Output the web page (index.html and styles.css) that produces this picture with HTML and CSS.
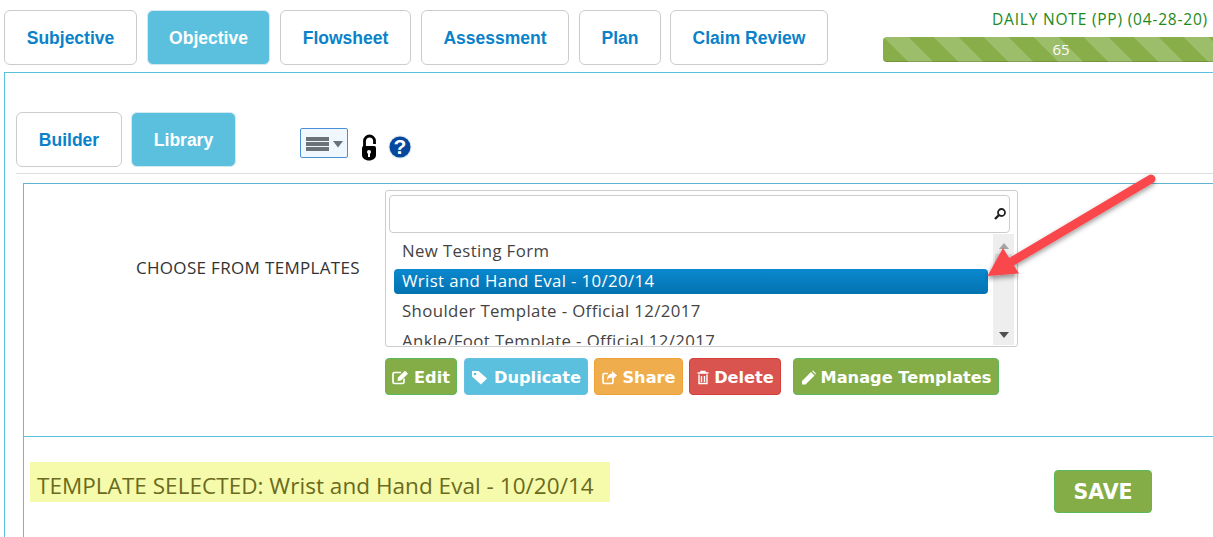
FILE: index.html
```html
<!DOCTYPE html>
<html lang="en">
<head>
<meta charset="utf-8">
<title>Daily Note</title>
<link rel="stylesheet" href="styles.css">
</head>
<body>
<div class="page">
  <header class="top">
    <nav class="tabs">
      <a class="tab tab-subj">Subjective</a>
      <a class="tab tab-obj active">Objective</a>
      <a class="tab tab-flow">Flowsheet</a>
      <a class="tab tab-assess">Assessment</a>
      <a class="tab tab-plan">Plan</a>
      <a class="tab tab-claim">Claim Review</a>
    </nav>
    <div class="note">
      <div class="note-title">DAILY NOTE (PP) (04-28-20)</div>
      <div class="progress">65</div>
    </div>
  </header>

  <main class="panel">
    <div class="subnav">
      <a class="tab tab-builder">Builder</a>
      <a class="tab tab-library active">Library</a>
      <div class="tools">
        <span class="menu-btn">
          <svg width="46" height="28" viewBox="0 0 46 28"><g fill="#6a727a"><rect x="5" y="8" width="23" height="4"/><rect x="5" y="13" width="23" height="4"/><rect x="5" y="18" width="23" height="4"/><path d="M32 12h10l-5 6.500z"/></g></svg>
        </span>
        <svg class="lock" width="16" height="27" viewBox="0 0 16 27"><path d="M3.500 14V7a5 5 0 0 1 10 0v3" fill="none" stroke="#000" stroke-width="2.800"/><path d="M1 14a2 2 0 0 1 2-2h10a2 2 0 0 1 2 2v7c0 3-3 5.500-7 5.500S1 24 1 21z" fill="#000"/><circle cx="8" cy="18" r="2" fill="#fff"/><rect x="7" y="18" width="2" height="5" fill="#fff"/></svg>
        <svg class="help" width="24" height="24" viewBox="0 0 24 24"><circle cx="12" cy="12" r="11.500" fill="#dfe6ee"/><circle cx="12" cy="12" r="10.500" fill="#05479c"/><text x="12" y="18.500" text-anchor="middle" class="help-q">?</text></svg>
      </div>
    </div>
    <div class="rule"></div>

    <section class="box">
      <div class="chooser">
        <label class="choose-label">CHOOSE FROM TEMPLATES</label>
        <div class="choose-main">
          <div class="listbox">
            <div class="search">
              <svg width="14" height="14" viewBox="0 0 14 14"><circle cx="8.500" cy="5.500" r="3.500" fill="none" stroke="#222" stroke-width="1.800"/><path d="M6 8l-4 4" stroke="#222" stroke-width="2.400"/></svg>
            </div>
            <div class="list-wrap">
              <ul class="list">
                <li>New Testing Form</li>
                <li class="selected">Wrist and Hand Eval - 10/20/14</li>
                <li>Shoulder Template - Official 12/2017</li>
                <li>Ankle/Foot Template - Official 12/2017</li>
              </ul>
              <div class="scroll">
                <span class="arrow-up"></span>
                <span class="thumb"></span>
                <span class="arrow-down"></span>
              </div>
            </div>
          </div>
          <div class="actions">
            <button class="btn green btn-edit"><svg width="18" height="15" viewBox="0 0 18 15"><path d="M12 8.500V12a1.500 1.500 0 0 1-1.500 1.500h-8A1.500 1.500 0 0 1 1 12V4a1.500 1.500 0 0 1 1.500-1.500H9" fill="none" stroke="#fff" stroke-width="1.700"/><path d="M6 7.500L13 .8l3 3L9 10.500l-3.500.6z" fill="#fff"/></svg>Edit</button>
            <button class="btn blue btn-dup"><svg width="19" height="15" viewBox="0 0 19 15"><path d="M1 1h6.500L16 8.500 10 14.500 1 6.500z" fill="#fff"/><circle cx="4" cy="4" r="1.300" fill="#5bc0de"/></svg>Duplicate</button>
            <button class="btn orange btn-share"><svg width="17" height="15" viewBox="0 0 17 15"><path d="M12 9v3a1.500 1.500 0 0 1-1.500 1.500h-7A1.500 1.500 0 0 1 2 12V5a1.500 1.500 0 0 1 1.500-1.500H7" fill="none" stroke="#fff" stroke-width="1.700"/><path d="M11 1l5 4.500L11 10V7.500C8 7.500 6.500 8.500 6 10.500 6 6.500 8 3.500 11 3.500z" fill="#fff"/></svg>Share</button>
            <button class="btn red btn-del"><svg width="14" height="15" viewBox="0 0 14 15"><path d="M1.500 3h11M5 3V1.500h4V3M3 4.500v9h8v-9M5.500 6v6M8.500 6v6" fill="none" stroke="#fff" stroke-width="1.400"/></svg>Delete</button>
            <button class="btn green btn-manage"><svg width="16" height="15" viewBox="0 0 16 15"><path d="M1 11l9-9 3.500 3.500-9 9H1zM11 1l1-.5 3 3-.5 1z" fill="#fff"/></svg>Manage Templates</button>
          </div>
        </div>
      </div>
      <div class="result">
        <div class="selected-note">TEMPLATE SELECTED: Wrist and Hand Eval - 10/20/14</div>
        <button class="save">SAVE</button>
      </div>
    </section>
  </main>

  <svg class="callout" width="200" height="120" viewBox="0 0 200 120">
    <defs><filter id="sh" x="-20%" y="-20%" width="140%" height="140%"><feDropShadow dx="-1" dy="3" stdDeviation="2.500" flood-color="#000" flood-opacity=".4"/></filter></defs>
    <g filter="url(#sh)" fill="#f9464b">
      <path d="M166 9L26 92" stroke="#f9464b" stroke-width="9" stroke-linecap="round"/>
      <path d="M2.500 106L18 78 34 103.500z"/>
    </g>
  </svg>
</div>
</body>
</html>
```

FILE: styles.css
```css
* { box-sizing: border-box; }
html, body { margin: 0; padding: 0; background: #fff; }
.page {
  position: relative;
  width: 1213px;
  height: 537px;
  overflow: hidden;
  font-family: "Open Sans", "DejaVu Sans", sans-serif;
}
.top {
  display: flex;
  height: 72px;
  padding: 10px 0 0 4px;
}
.tabs { display: flex; gap: 10px; }
.tab {
  display: flex;
  align-items: center;
  justify-content: center;
  height: 55px;
  padding-top: 2px;
  border: 1px solid #ccc;
  border-radius: 6px;
  background: #fff;
  color: #0a82c9;
  font: bold 17.5px "Liberation Sans", Arial, sans-serif;
}
.tab.active { background: #5bc0de; color: #fff; border-color: #d3e8ef; }
.tab-subj { width: 133px; }
.tab-obj { width: 123px; }
.tab-flow { width: 131px; }
.tab-assess { width: 148px; }
.tab-plan { width: 82px; margin-right: -1px; }
.tab-claim { width: 158px; }
.tab-builder { width: 106px; }
.tab-library { width: 105px; }

.note { margin-left: 55px; width: 356px; flex: none; }
.note-title {
  width: 325px;
  height: 27px;
  text-align: right;
  color: #1c8a1c;
  font: 15.5px/19px "Open Sans", sans-serif;
  letter-spacing: .8px;
  white-space: nowrap;
}
.progress {
  height: 25px;
  border-radius: 4px;
  color: #fff;
  text-align: center;
  font: 15px/25px "Open Sans", sans-serif;
  background: repeating-linear-gradient(45deg, #87ae49 0, #87ae49 17.68px, #9cbd69 17.68px, #9cbd69 35.36px);
  box-shadow: inset 0 -1px 0 rgba(0,0,0,.15);
}

.panel {
  height: 465px;
  margin-left: 4px;
  border-top: 1px solid #5bc0de;
  border-left: 1px solid #5bc0de;
  padding: 39px 0 0 11px;
}
.subnav { display: flex; gap: 9px; height: 55px; }
.tools {
  display: flex;
  align-items: flex-start;
  margin-left: 55px;
  padding-top: 16px;
}
.menu-btn {
  display: block;
  width: 48px;
  height: 30px;
  border: 1px solid #4a90d6;
  border-radius: 2px;
  background: #f0f7fd;
}
.lock { margin: 6px 0 0 13px; }
.help { margin: 7px 0 0 11px; }
.help-q { font: bold 21px "Liberation Sans", sans-serif; fill: #fff; }
.rule { height: 1px; margin-top: 6px; background: #ddd; }

.box {
  margin: 9px 0 0 7px;
  border-top: 1px solid #62b4d0;
  border-left: 1px solid #5bc0de;
  height: 360px;
}
.chooser {
  display: flex;
  height: 253px;
  border-bottom: 1px solid #5bc0de;
  padding: 6px 0 0 0;
}
.choose-label {
  width: 361px;
  flex: none;
  padding: 68px 25px 0 0;
  text-align: right;
  color: #333;
  font: 17px/20px "Open Sans", sans-serif;
  letter-spacing: .33px;
  white-space: nowrap;
}
.listbox {
  width: 633px;
  height: 157px;
  border: 1px solid #ccc;
  border-radius: 3px;
  padding: 4px 3px 0;
  overflow: hidden;
}
.search {
  display: flex;
  align-items: center;
  justify-content: flex-end;
  height: 38px;
  width: 621px;
  border: 1px solid #ccc;
  border-radius: 4px;
  padding-right: 2px;
}
.list-wrap { display: flex; justify-content: space-between; height: 111px; margin-top: 1px; }
.list {
  list-style: none;
  margin: 0;
  padding: 0 5px;
  width: 604px;
  overflow: hidden;
}
.list li {
  height: 25px;
  margin-bottom: 5px;
  padding-left: 8px;
  border-radius: 4px;
  color: #444;
  font: 16.8px/23px "Open Sans", sans-serif;
  letter-spacing: .38px;
  white-space: nowrap;
}
.list li:first-child { margin-top: 5px; }
.list li.selected {
  background: linear-gradient(#0a88cf, #0373b0);
  color: #fff;
}
.scroll {
  position: relative;
  width: 21px;
  background: #eee;
  display: flex;
  flex-direction: column;
  align-items: center;
}
.arrow-up { margin-top: 9px; border: 5px solid transparent; border-top: 0; border-bottom: 6px solid #a5a5a5; }
.thumb { width: 17px; height: 14px; margin-top: 5px; background: #ddd; }
.arrow-down { margin-top: auto; margin-bottom: 7px; border: 5px solid transparent; border-bottom: 0; border-top: 6px solid #505050; }

.actions { display: flex; margin-top: 11px; gap: 6px; }
.btn {
  display: flex;
  align-items: center;
  justify-content: center;
  gap: 4px;
  height: 37px;
  padding: 2px 0 0;
  border: 1px solid;
  border-radius: 4px;
  color: #fff;
  font: bold 16.2px "DejaVu Sans", sans-serif;
}
.green { background: #85ad47; border-color: #5cb85c; }
.blue { background: #5bc0de; border-color: #65bfe0; }
.orange { background: #f0ad4e; border-color: #eea236; }
.red { background: #d9534f; border-color: #d43f3a; }
.btn-edit { width: 72px; margin-right: 1px; }
.btn-dup { width: 124px; }
.btn-share { width: 89px; }
.btn-del { width: 92px; margin-right: 6px; }
.btn-manage { width: 206px; }

.result { display: flex; align-items: flex-start; padding-left: 6px; }
.selected-note {
  width: 580px;
  height: 40px;
  margin-top: 25px;
  padding-left: 7px;
  background: #f5fbab;
  color: #6a6a20;
  font: 22.5px/48px "Open Sans", sans-serif;
  letter-spacing: .04px;
  white-space: nowrap;
}
.save {
  width: 98px;
  height: 43px;
  margin: 33px 0 0 444px;
  border: 1px solid #5cb85c;
  border-radius: 4px;
  background: #85ad47;
  color: #fff;
  font: bold 20.5px "DejaVu Sans", sans-serif;
}

.callout { position: absolute; left: 985px; top: 170px; }
```
